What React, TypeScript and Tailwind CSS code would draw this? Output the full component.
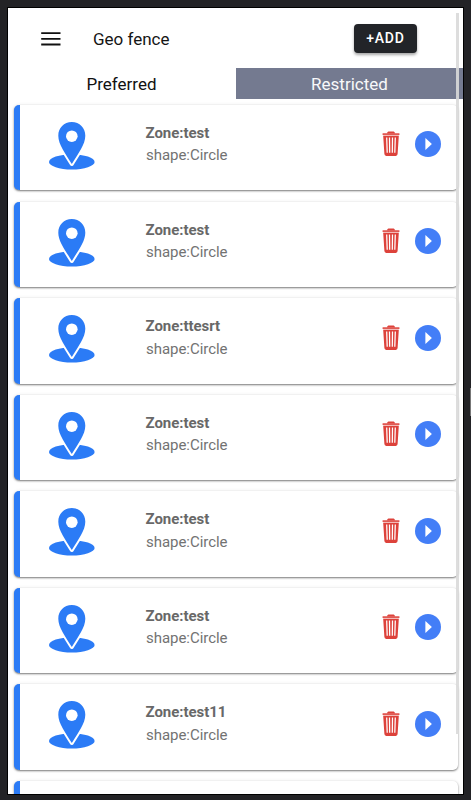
type Zone = {
  id: number;
  name: string;
  shape: string;
};

const zones: Zone[] = [
  { id: 1, name: 'test', shape: 'Circle' },
  { id: 2, name: 'test', shape: 'Circle' },
  { id: 3, name: 'ttesrt', shape: 'Circle' },
  { id: 4, name: 'test', shape: 'Circle' },
  { id: 5, name: 'test', shape: 'Circle' },
  { id: 6, name: 'test', shape: 'Circle' },
  { id: 7, name: 'test11', shape: 'Circle' },
];

const cardClass =
  'flex shrink-0 border-l-[6.5px] border-[#2b7bf6] bg-white shadow-[0_1px_2px_rgba(0,0,0,0.5),0_0_4px_rgba(0,0,0,0.07)]';

function MenuIcon() {
  return (
    <svg viewBox="0 0 20 14" className="w-5 h-3.5" fill="#111">
      <path d="M0.2 0.2h19.3v1.9h-19.3zM0.2 5.9h19.3v1.9h-19.3zM0.2 11.5h19.3v1.9h-19.3z" />
    </svg>
  );
}

function PinIcon() {
  return (
    <svg viewBox="0 0 46 48" className="w-[46px] h-12 shrink-0">
      <ellipse cx="22.8" cy="39.9" rx="22.8" ry="7.6" fill="#2b7bf6" />
      <path
        d="M22.8 0C15 0 9.3 5.9 9.3 13.7C9.3 22.5 16.5 31.5 22.8 42C29.1 31.5 36.3 22.5 36.3 13.7C36.3 5.9 30.6 0 22.8 0Z"
        fill="#2b7bf6"
        stroke="#fff"
        strokeWidth="4"
        strokeLinejoin="round"
        paintOrder="stroke"
      />
      <circle cx="22.8" cy="14.2" r="5.8" fill="#fff" />
    </svg>
  );
}

function TrashIcon() {
  return (
    <svg viewBox="0 0 18 26" className="w-[18px] h-[26px]">
      <path d="M5 2.4C5.2 1 6 0.5 7 0.5h4c1 0 1.8 0.5 2 1.9z" fill="#dd423b" />
      <path d="M0.6 2.3h16.8v1.7H0.6z" fill="#dd423b" />
      <path d="M1.2 3.8h15.6v1.4H1.2z" fill="#f3bab7" />
      <path d="M1.2 4.9h15.6l-1.2 18.2q-0.1 1.8-1.8 1.8H4.2q-1.7 0-1.8-1.8z" fill="#dd423b" />
      <path
        d="M4.7 6.6l0.5 15.2M7.5 6.6l0.2 15.2M10.5 6.6l-0.2 15.2M13.3 6.6l-0.5 15.2"
        stroke="#fff"
        strokeWidth="1.25"
        fill="none"
      />
    </svg>
  );
}

function PlayIcon() {
  return (
    <svg viewBox="0 0 26 26" className="w-[26px] h-[26px]">
      <circle cx="13" cy="13" r="13" fill="#437ef7" />
      <path d="M10.4 6.9v12.2l6.5-6.1z" fill="#fff" />
    </svg>
  );
}

function ZoneCard({ zone }: { zone: Zone }) {
  return (
    <div className={`${cardClass} h-[85.4px] rounded-[5px]`}>
      <div className="flex w-full pt-[17px] pl-[29px] pr-[16.5px]">
        <PinIcon />
        <div className="ml-[51px]">
          <p className="text-[15px] leading-[22px] font-bold tracking-[-0.05px] text-[#686868]">
            Zone:{zone.name}
          </p>
          <p className="ml-[0.5px] pt-[0.4px] text-[15px] leading-[23px] tracking-[-0.04px] text-[#727272]">
            shape:{zone.shape}
          </p>
        </div>
        <div className="ml-auto flex items-start gap-x-[15.5px] pt-[9.4px]">
          <button type="button">
            <TrashIcon />
          </button>
          <button type="button">
            <PlayIcon />
          </button>
        </div>
      </div>
    </div>
  );
}

export default function App() {
  return (
    <div className="relative h-[800px] w-[471px] overflow-hidden bg-[#232326] pt-2 pl-2 font-[Roboto,sans-serif]">
      <div className="relative h-[786px] w-[455px] overflow-hidden bg-white outline outline-black">
        <header className="flex h-[60px] items-center pl-[33px] pr-[46px]">
          <div className="pt-[2px]">
            <MenuIcon />
          </div>
          <h1 className="ml-8 pt-[3px] text-[17px] text-[#151515]">Geo fence</h1>
          <button
            type="button"
            className="ml-auto h-[29px] w-[63px] rounded-[4px] bg-[#222428] text-sm font-medium tracking-[0.8px] text-white shadow-[0_2px_3px_rgba(0,0,0,0.35)]"
          >
            +ADD
          </button>
        </header>

        <div className="flex h-[31.4px] text-[17px]">
          <div className="flex w-[227px] items-center justify-center pt-[2px] text-[#111]">
            Preferred
          </div>
          <div className="ml-px flex flex-1 items-center justify-center bg-[#747a90] pt-[2px] text-[#f8f8fa]">
            Restricted
          </div>
        </div>

        <div className="flex flex-col gap-y-[11.2px] pt-[5.6px] pl-[5.5px] pr-[5.5px]">
          {zones.map(zone => (
            <ZoneCard key={zone.id} zone={zone} />
          ))}
          <div className={`${cardClass} h-[14px] rounded-t-[5px]`} />
        </div>

        <div className="absolute top-[5px] right-[4px] h-[721px] w-[3px] bg-[#d9d9d9]/90" />
      </div>
      <div className="absolute top-[388px] left-[470px] h-7 w-px bg-[#777]" />
    </div>
  );
}
